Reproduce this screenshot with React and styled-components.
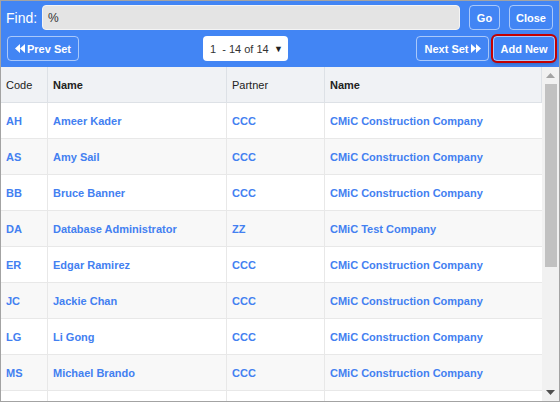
import React from 'react';
import styled, { createGlobalStyle } from 'styled-components';

const GlobalStyle = createGlobalStyle`
  html, body { margin: 0; padding: 0; background: #fff; }
  body { font-family: "Liberation Sans", Arial, sans-serif; }
`;

const rows = [
  { code: 'AH', name: 'Ameer Kader', partner: 'CCC', pname: 'CMiC Construction Company' },
  { code: 'AS', name: 'Amy Sail', partner: 'CCC', pname: 'CMiC Construction Company' },
  { code: 'BB', name: 'Bruce Banner', partner: 'CCC', pname: 'CMiC Construction Company' },
  { code: 'DA', name: 'Database Administrator', partner: 'ZZ', pname: 'CMiC Test Company' },
  { code: 'ER', name: 'Edgar Ramirez', partner: 'CCC', pname: 'CMiC Construction Company' },
  { code: 'JC', name: 'Jackie Chan', partner: 'CCC', pname: 'CMiC Construction Company' },
  { code: 'LG', name: 'Li Gong', partner: 'CCC', pname: 'CMiC Construction Company' },
  { code: 'MS', name: 'Michael Brando', partner: 'CCC', pname: 'CMiC Construction Company' },
  { code: '', name: '', partner: '', pname: '' },
];

const Frame = styled.div`
  width: 560px;
  height: 402px;
  box-sizing: border-box;
  border: 1px solid #a3a3a3;
  display: flex;
  flex-direction: column;
  overflow: hidden;
`;

const Toolbar = styled.div`
  background: #4285f4;
  padding: 4px 2px 6px 5px;
  display: flex;
  flex-direction: column;
  gap: 6px;
`;

const Line = styled.div`
  display: flex;
  align-items: center;
  height: 25px;
  padding-right: ${({ $pr }) => $pr || 0}px;
`;

const Label = styled.span`
  color: #fff;
  font-size: 14px;
  width: 36px;
`;

const Search = styled.div`
  flex: 1;
  height: 25px;
  box-sizing: border-box;
  background: #e4e4e4;
  border: 1px solid #f4f4f4;
  border-radius: 4px;
  padding: 0 5px;
  display: flex;
  align-items: center;
  font-size: 12px;
  color: #333;
  margin-right: 9px;
`;

const Btn = styled.button`
  height: 25px;
  box-sizing: border-box;
  width: ${({ $w }) => $w}px;
  margin-left: ${({ $ml }) => $ml || 0}px;
  background: transparent;
  border: 1px solid rgba(255, 255, 255, 0.55);
  border-radius: 4px;
  color: #fff;
  font-family: "Liberation Sans", Arial, sans-serif;
  font-size: 11px;
  font-weight: bold;
  padding: 0;
  display: flex;
  align-items: center;
  justify-content: center;
  gap: 2px;
  ${({ $focus }) => $focus && `
    outline: 2px solid #c40000;
    box-shadow: 0 2px 5px rgba(0,0,0,0.35);
  `}
`;

const Spacer = styled.div`
  flex: 1;
  display: flex;
  justify-content: center;
`;

const Select = styled.div`
  width: 85px;
  height: 25px;
  box-sizing: border-box;
  background: #fff;
  border-radius: 4px;
  display: flex;
  align-items: center;
  justify-content: space-between;
  padding: 0 5px 0 7px;
  font-size: 11px;
  color: #333;
  margin-left: -4px;
  span { white-space: pre; }
  i { font-style: normal; font-size: 9px; color: #222; }
`;

const Body = styled.div`
  flex: 1;
  display: flex;
  min-height: 0;
`;

const Table = styled.div`
  flex: 1;
  display: grid;
  grid-template-columns: 47px 179px 98px 1fr;
  grid-auto-rows: 36px;
  align-content: start;
  overflow: hidden;
`;

const Head = styled.div`
  background: #f0f2f5;
  border-bottom: 1px solid #dde1e6;
  border-right: 1px solid #dde1e6;
  box-sizing: border-box;
  display: flex;
  align-items: center;
  padding-left: 5px;
  font-size: 11px;
  color: #222;
  font-weight: ${({ $bold }) => ($bold ? 'bold' : 'normal')};
  &:last-of-type { border-right: none; }
`;

const Cell = styled.div`
  background: ${({ $alt }) => ($alt ? '#f8f8f8' : '#fff')};
  border-bottom: 1px solid #e8e8e8;
  border-right: ${({ $last }) => ($last ? 'none' : '1px solid #e8e8e8')};
  box-sizing: border-box;
  display: flex;
  align-items: center;
  padding-left: 5px;
  font-size: 11px;
  font-weight: bold;
  color: #4380f1;
  white-space: nowrap;
`;

const Scroll = styled.div`
  width: 17px;
  background: #f1f1f1;
  display: flex;
  flex-direction: column;
  align-items: center;
`;

const Arrow = styled.div`
  height: 17px;
  display: flex;
  align-items: center;
  justify-content: center;
`;

const Thumb = styled.div`
  width: 12px;
  height: 183px;
  background: #c1c1c1;
`;

const Track = styled.div`
  flex: 1;
`;

const DoubleArrow = ({ left }) => (
  <svg width="10" height="9" viewBox="0 0 10 9" style={{ transform: left ? 'scaleX(-1)' : 'none' }}>
    <path d="M0 0 L5 4.5 L0 9 Z M5 0 L10 4.5 L5 9 Z" fill="#fff" />
  </svg>
);

const Tri = ({ up }) => (
  <svg width="9" height="5" viewBox="0 0 9 5">
    <path d={up ? 'M0 5 L4.5 0 L9 5 Z' : 'M0 0 L4.5 5 L9 0 Z'} fill={up ? '#a3a3a3' : '#505050'} />
  </svg>
);

export default function App() {
  return (
    <>
      <GlobalStyle />
      <Frame>
        <Toolbar>
          <Line $pr={4}>
            <Label>Find:</Label>
            <Search>%</Search>
            <Btn $w={31}>Go</Btn>
            <Btn $w={44} $ml={9}>Close</Btn>
          </Line>
          <Line $pr={2}>
            <Btn $w={72} $ml={1}><DoubleArrow left />Prev Set</Btn>
            <Spacer>
              <Select><span>1  - 14 of 14</span><i>▼</i></Select>
            </Spacer>
            <Btn $w={73}>Next Set<DoubleArrow /></Btn>
            <Btn $w={62} $ml={4} $focus>Add New</Btn>
          </Line>
        </Toolbar>
        <Body>
          <Table>
            <Head>Code</Head>
            <Head $bold>Name</Head>
            <Head>Partner</Head>
            <Head $bold>Name</Head>
            {rows.map((r, i) => (
              <React.Fragment key={i}>
                <Cell $alt={i % 2 === 1}>{r.code}</Cell>
                <Cell $alt={i % 2 === 1}>{r.name}</Cell>
                <Cell $alt={i % 2 === 1}>{r.partner}</Cell>
                <Cell $alt={i % 2 === 1} $last>{r.pname}</Cell>
              </React.Fragment>
            ))}
          </Table>
          <Scroll>
            <Arrow><Tri up /></Arrow>
            <Thumb />
            <Track />
            <Arrow><Tri /></Arrow>
          </Scroll>
        </Body>
      </Frame>
    </>
  );
}
